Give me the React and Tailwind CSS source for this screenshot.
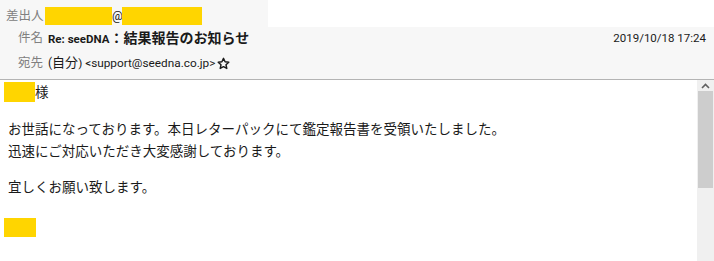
import React from 'react';

const font = { fontFamily: 'Roboto, "Noto Sans CJK JP", sans-serif' };

function Redact({ className }) {
  return <span className={`inline-block bg-[#ffd500] ${className}`} />;
}

function StarOutline() {
  return (
    <svg width="13" height="13" viewBox="0 0 24 24" className="ml-[2px]">
      <path
        d="M12 2.5l2.9 6.4 6.9.7-5.2 4.7 1.5 6.9L12 17.7l-6.1 3.5 1.5-6.9-5.2-4.7 6.9-.7z"
        fill="none"
        stroke="#1a1a1a"
        strokeWidth="2.6"
        strokeLinejoin="round"
      />
    </svg>
  );
}

export default function App() {
  return (
    <div className="w-[714px] h-[261px] bg-white text-[#1a1a1a] overflow-hidden flex flex-col" style={font}>
      {/* Header */}
      <div className="flex h-[27px] shrink-0">
        <div className="w-[268px] bg-[#f7f7f7] flex items-center pl-[6px] pt-[5px] text-[12.5px]">
          <span className="text-[#808080] w-[39px]">差出人</span>
          <Redact className="w-[67px] h-[18px]" />
          <span className="text-[12px] w-[10px] text-center">@</span>
          <Redact className="w-[80px] h-[18px]" />
        </div>
        <div className="flex-1 bg-white" />
      </div>
      <div className="h-[53px] shrink-0 bg-[#f7f7f7] border-b border-[#b4b4b4] text-[12.5px]">
        <div className="flex items-center h-[23px] pl-[18px] pr-[8px]">
          <span className="text-[#808080] w-[30px]">件名</span>
          <span className="font-bold text-[14px]">
            <span className="text-[11.5px]">Re: seeDNA</span>：結果報告のお知らせ
          </span>
          <span className="ml-auto text-[11.5px]">2019/10/18 17:24</span>
        </div>
        <div className="flex items-center h-[26px] pl-[18px]">
          <span className="text-[#808080] w-[30px]">宛先</span>
          <span className="text-[13px]">
            <span className="text-[12px]">(</span>自分<span className="text-[11.8px]">) &lt;support@seedna.co.jp&gt;</span>
          </span>
          <StarOutline />
        </div>
      </div>

      {/* Body */}
      <div className="flex flex-1 min-h-0">
        <div className="flex-1 text-[13.5px] leading-[22px]">
          <div className="flex items-center mt-[2px] pl-[4px] h-[20px]">
            <Redact className="w-[31px] h-[20px]" />
            <span>様</span>
          </div>
          <div className="pl-[8px] mt-[16px]">
            <p>お世話になっております。本日レターパックにて鑑定報告書を受領いたしました。</p>
            <p>迅速にご対応いただき大変感謝しております。</p>
            <p className="mt-[14px]">宜しくお願い致します。</p>
          </div>
          <div className="pl-[4px] mt-[20px]">
            <Redact className="w-[32px] h-[19px] block" />
          </div>
        </div>
        <div className="w-[17px] bg-[#f0f0f0] flex flex-col">
          <div className="h-[11px] flex items-center justify-center">
            <svg width="9" height="6" viewBox="0 0 9 6">
              <path d="M1 5l3.5-3.5L8 5" fill="none" stroke="#606060" strokeWidth="1.6" />
            </svg>
          </div>
          <div className="h-[97px] mx-[1px] bg-[#cdcdcd]" />
        </div>
      </div>
    </div>
  );
}
